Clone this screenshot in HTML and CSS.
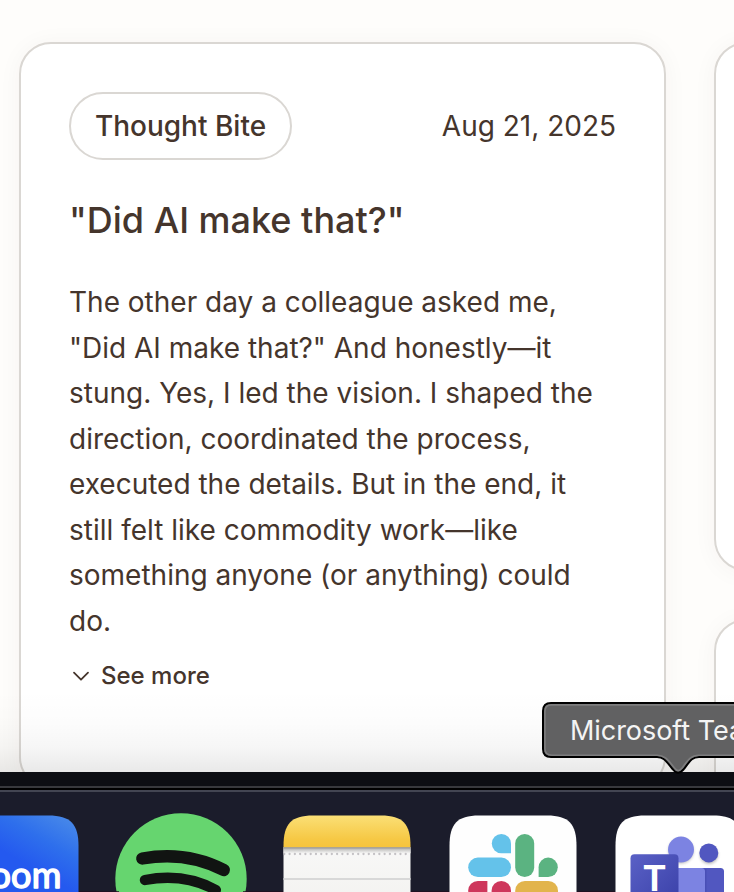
FILE: index.html
```html
<!DOCTYPE html>
<html lang="en">
<head>
<meta charset="utf-8">
<title>Thought Bites</title>
<link rel="stylesheet" href="styles.css">
</head>
<body>
<main class="page">
  <article class="card card-main">
    <header class="card-head">
      <span class="tag">Thought Bite</span>
      <time class="date">Aug 21, 2025</time>
    </header>
    <h2 class="title">"Did AI make that?"</h2>
    <p class="body">The other day a colleague asked me,<br>"Did AI make that?" And honestly—it<br>stung. Yes, I led the vision. I shaped the<br>direction, coordinated the process,<br>executed the details. But in the end, it<br>still felt like commodity work—like<br>something anyone (or anything) could<br>do.</p>
    <div class="more">
      <svg class="chevron" width="24" height="24" viewBox="0 0 24 24"><path d="M5 9.700l7 7 7-7"/></svg>
      <span>See more</span>
    </div>
  </article>
  <div class="column">
    <div class="card card-side"></div>
    <div class="card card-next"></div>
  </div>
</main>
<footer class="dock">
  <svg class="icons" width="734" height="100" viewBox="0 792 734 100">
    <defs>
      <linearGradient id="blue" gradientUnits="userSpaceOnUse" x1="66" y1="818" x2="36" y2="870"><stop offset="0" stop-color="#4687e9"/><stop offset=".5" stop-color="#2e6fec"/><stop offset="1" stop-color="#2459ef"/></linearGradient>
      <linearGradient id="yellow" x1="0" y1="0" x2="0" y2="1"><stop offset="0" stop-color="#fbe077"/><stop offset=".75" stop-color="#f6c844"/><stop offset="1" stop-color="#f6c43c"/></linearGradient>
      <linearGradient id="paper" x1="0" y1="0" x2="0" y2="1"><stop offset="0" stop-color="#f8f8f7"/><stop offset="1" stop-color="#efeeeb"/></linearGradient>
      <linearGradient id="fold" x1="0" y1="0" x2="0" y2="1"><stop offset="0" stop-color="#8b8a87"/><stop offset=".4" stop-color="#c8c8c6"/><stop offset="1" stop-color="#f6f6f5"/></linearGradient>
      <linearGradient id="tile" x1="0" y1="0" x2="1" y2="1"><stop offset="0" stop-color="#5a61c6"/><stop offset="1" stop-color="#3a40a8"/></linearGradient>
      <clipPath id="notes"><path d="M283.500 945V846C283.500 824 291 815.500 313 815.500H381C403 815.500 410.500 824 410.500 846V945Z"/></clipPath>
      <filter id="soft" x="-30%" y="-30%" width="160%" height="160%"><feGaussianBlur stdDeviation="1.6"/></filter>
    </defs>
    <path fill="url(#blue)" d="M-49 943V846C-49 824 -41 815.500 -19 815.500H48.500C70.500 815.500 78.500 824 78.500 846V943Z"/>
    <text class="zoom-word" x="61.500" y="888.300" text-anchor="end">zoom</text>
    <circle cx="181" cy="879" r="65.700" fill="#66d56f"/>
    <g fill="none" stroke="#111412" stroke-linecap="round">
      <path stroke-width="12.400" d="M142.300 858.500Q186 850.500 223.800 870"/>
      <path stroke-width="10.400" d="M145 880Q184 872.500 215.800 890"/>
    </g>
    <g clip-path="url(#notes)">
      <path fill="url(#paper)" d="M283 847h128v98h-128z"/>
      <path fill="url(#yellow)" d="M283 815h128v32.500h-128z"/>
      <path fill="url(#fold)" d="M283 847.200h128v6h-128z"/>
      <path stroke="#c4c2c5" stroke-width="2.300" stroke-linecap="round" stroke-dasharray="0 5.280" d="M284.300 854H411"/>
      <path stroke="#d8d8d8" stroke-width="2" d="M283 879h128"/>
    </g>
    <path fill="#fefefe" d="M449.500 943V846C449.500 824 457 815.500 479 815.500H547C569 815.500 576.500 824 576.500 846V943Z"/>
    <g fill="#64c2ea"><path d="M511 853.200h-9.600a9.600 9.600 0 1 1 9.600-9.600z"/><rect x="468.200" y="857.600" width="42.800" height="19.400" rx="9.700"/></g>
    <g fill="#5bb381"><rect x="515.200" y="834" width="19" height="43" rx="9.500"/><path d="M538.600 877v-9.700a9.600 9.700 0 1 1 9.600 9.700z"/></g>
    <g fill="#ce375c"><path d="M487.400 881v9.600a9.600 9.600 0 1 1-9.600-9.600z"/><rect x="491.600" y="881" width="19.400" height="43" rx="9.700"/></g>
    <rect x="515.200" y="881" width="42.800" height="19.400" rx="9.700" fill="#e2b44c"/>
    <path fill="#fff" d="M615.500 943V846C615.500 824 623 815.500 645 815.500H713C735 815.500 742.500 824 742.500 846V943Z"/>
    <circle cx="681" cy="851" r="12.500" fill="#888" opacity=".55" filter="url(#soft)"/>
    <circle cx="709" cy="855" r="9" fill="#888" opacity=".6" filter="url(#soft)"/>
    <circle cx="681" cy="849.600" r="13" fill="#7c83e2"/>
    <circle cx="708.800" cy="852.900" r="9.500" fill="#5157c0"/>
    <path fill="#5157c0" d="M690 868h30.500q3.500 0 3.500 3.500V900h-34z"/>
    <path fill="#4248ab" opacity=".5" d="M702 869h4.500v30H702z"/>
    <path fill="#7c83e2" d="M670 868h31.500q3.500 0 3.500 3.500V900h-35z"/>
    <rect x="630.500" y="854.300" width="48" height="50" rx="4" fill="url(#tile)"/>
    <text class="teams-letter" x="654.600" y="891" text-anchor="middle">T</text>
    <path fill="#210f20" opacity=".75" d="M79 891h40v1H79zM243 891h40v1h-40zM411 891h38v1h-38zM577 891h38v1h-38z"/>
  </svg>
</footer>
<div class="tooltip">
  <svg width="220" height="76" viewBox="540 700 220 76">
    <path fill="#616162" stroke="#000" stroke-width="2" d="M551 703H770V757H699C692 757 690 761 683.500 769.500Q678 776 673 769.500C666 761 664 757 657 757H551Q543 757 543 749V711Q543 703 551 703Z"/>
    <path fill="none" stroke="#7d7d7e" stroke-width="1.600" d="M551.500 704.900H770M770 755.200H699C691 755.200 688 760 682 768Q678 773 674.500 768C668 760 665 755.200 657 755.200H552Q544.900 755.200 544.900 748.500V711.500Q544.900 704.900 551.500 704.900"/>
  </svg>
  <span class="tooltip-label">Microsoft Teams</span>
</div>
</body>
</html>
```

FILE: styles.css
```css
* { box-sizing: border-box; }

body {
  margin: 0;
  width: 734px;
  height: 892px;
  overflow: hidden;
  position: relative;
  background: #fefdfb;
  color: #45352c;
  font-family: Inter, sans-serif;
}

.page {
  position: relative;
  display: flex;
  align-items: flex-start;
  gap: 48px;
  width: 734px;
  height: 772px;
  padding: 42px 0 0 19px;
  overflow: hidden;
}

/* Shade cast upwards by the dock */
.page::after {
  content: "";
  position: absolute;
  inset: 690px 0 0;
  background: linear-gradient(rgba(0, 0, 0, 0), rgba(0, 0, 0, .012) 40%, rgba(0, 0, 0, .035) 70%, rgba(0, 0, 0, .085));
}

.card {
  flex: none;
  border: 2px solid #dad7d3;
  border-radius: 32px;
  background: #fff;
  box-shadow: 0 2px 24px rgba(68, 52, 43, .045);
}

.card-main {
  width: 647px;
  height: 747px;
  padding: 48px;
}

.column {
  display: flex;
  flex: none;
  flex-direction: column;
  gap: 48px;
  width: 647px;
}

.card-side { height: 529px; }
.card-next { height: 300px; }

.card-head {
  display: flex;
  align-items: center;
  justify-content: space-between;
  height: 68px;
}

.tag {
  width: 223px;
  height: 68px;
  border: 2px solid #dad7d3;
  border-radius: 34px;
  font-size: 28px;
  font-weight: 500;
  line-height: 65px;
  text-align: center;
}

.date {
  font-size: 28px;
  line-height: 68px;
}

.title {
  margin: 36px 0 0;
  font-size: 36px;
  font-weight: 500;
  line-height: 48px;
}

.body {
  margin: 36px 0 0;
  font-size: 28px;
  line-height: 45.5px;
  white-space: nowrap;
}

.more {
  display: flex;
  align-items: center;
  gap: 8px;
  margin-top: 14px;
  height: 34px;
  font-size: 24px;
  font-weight: 500;
}

.chevron {
  fill: none;
  stroke: #45352c;
  stroke-width: 1.8;
  stroke-linecap: round;
  stroke-linejoin: round;
}

.dock {
  height: 120px;
  padding-top: 20px;
  background: linear-gradient(#0d0e13 14px, #38393d 14px 16px, #000 16px 18px, #434552 18px 20px, #1b1c2b 20px);
}

.icons { display: block; }

.zoom-word {
  fill: #fff;
  stroke: #fff;
  stroke-width: 1.5px;
  stroke-linejoin: round;
  font: 400 36px Lato, sans-serif;
  letter-spacing: .2px;
}

.teams-letter {
  fill: #fff;
  font: 700 36px "Liberation Sans", sans-serif;
}

.tooltip {
  position: absolute;
  left: 540px;
  top: 700px;
  width: 194px;
  height: 76px;
  overflow: hidden;
}

.tooltip-label {
  position: absolute;
  left: 30px;
  top: 14px;
  color: #f4f4f4;
  font-size: 27px;
  line-height: 34px;
  letter-spacing: -.05px;
  white-space: nowrap;
}
```
